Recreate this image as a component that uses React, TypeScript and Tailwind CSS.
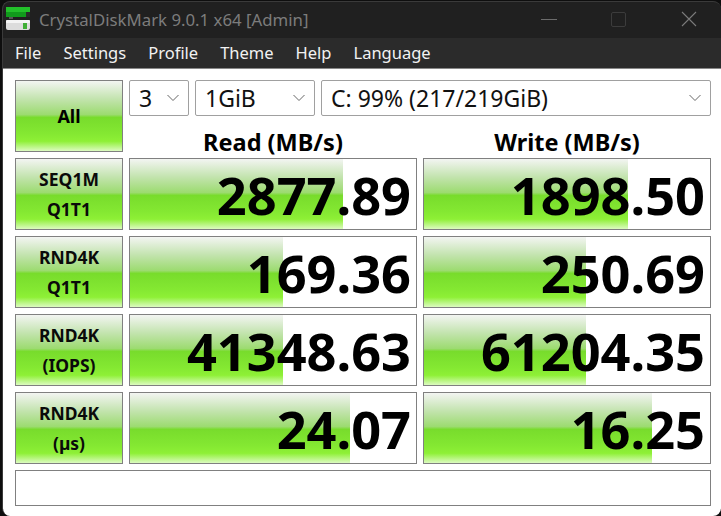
const FONT = "font-['Noto_Sans',sans-serif]"
const GREEN = 'bg-[linear-gradient(180deg,#f3f5f2_0%,#c4e4b0_25%,#9cdb70_48%,#78dc2c_52%,#84e832_75%,#8ef036_86%,#dcfbc0_100%)]'

const rows = [
  { top: 'SEQ1M', bottom: 'Q1T1', read: '2877.89', readBar: 213, write: '1898.50', writeBar: 204 },
  { top: 'RND4K', bottom: 'Q1T1', read: '169.36', readBar: 153, write: '250.69', writeBar: 162 },
  { top: 'RND4K', bottom: '(IOPS)', read: '41348.63', readBar: 153, write: '61204.35', writeBar: 162 },
  { top: 'RND4K', bottom: '(µs)', read: '24.07', readBar: 220, write: '16.25', writeBar: 228 },
]

const Combo = ({ label, className }: { label: string; className: string }) => (
  <div className={`flex h-9 items-center justify-between rounded-[2px] border border-[#a0a0a0] bg-white pl-[9px] pr-[8px] text-[23px] text-[#111] ${className}`}>
    <span className="pt-[1px]">{label}</span>
    <svg width="14" height="8" viewBox="0 0 14 8" fill="none" stroke="#666" strokeWidth="1">
      <path d="M1.5 1 L7 6.5 L12.5 1" />
    </svg>
  </div>
)

const Score = ({ value, bar }: { value: string; bar: number }) => (
  <div
    className={`flex h-[72px] items-center justify-end border border-[#808080] bg-white pt-[3px] pr-[5px] ${GREEN} bg-no-repeat`}
    style={{ backgroundSize: `${bar}px 100%` }}
  >
    <span className="text-[52.3px] leading-none font-bold text-black">{value}</span>
  </div>
)

function DriveIcon() {
  return (
    <svg width="26" height="24" viewBox="0 0 26 24" className="shrink-0">
      <rect x="1" y="0" width="24" height="5" fill="#22c02a" />
      <rect x="1" y="5" width="20" height="5" fill="#119a1c" />
      <rect x="21" y="5" width="4" height="5" fill="#2a2a2a" />
      <rect x="4" y="10" width="4" height="2" fill="#555" />
      <rect x="1" y="13" width="24" height="10" rx="2" fill="#dcdcdc" />
      <rect x="1" y="13" width="24" height="3" rx="1" fill="#f4f4f4" />
      <rect x="18" y="16" width="4" height="6" fill="#3fae35" />
    </svg>
  )
}

export default function App() {
  return (
    <div className={`h-[516px] w-[721px] overflow-hidden bg-[#0e0e0e] pl-[2px] pt-[1px] ${FONT}`}>
      <div className="flex h-[515px] flex-col overflow-hidden rounded-[8px] border-t border-l border-[#3a3a3a] bg-[#202020]">

        {/* Title bar */}
        <div className="flex h-9 shrink-0 items-center pl-[2px] pb-[2px]">
          <DriveIcon />
          <span className="ml-[8px] pt-[1px] text-[16.8px] text-[#7c7c7c]">CrystalDiskMark 9.0.1 x64 [Admin]</span>
          <div className="ml-auto flex items-center pr-[24px]">
            <span className="h-px w-[16px] bg-[#6c6c6c]" />
            <span className="ml-[54px] h-[15px] w-[15px] rounded-[2px] border border-[#3c3c3c]" />
            <svg width="16" height="16" viewBox="0 0 16 16" stroke="#7a7a7a" strokeWidth="1.1" className="ml-[55px]">
              <path d="M1 1 L15 15 M15 1 L1 15" />
            </svg>
          </div>
        </div>

        {/* Menu */}
        <div className="flex h-[30px] shrink-0 items-center gap-[22px] bg-[#2b2b2b] pl-[12px] text-[16.5px] text-[#f2f2f2]">
          <span>File</span>
          <span>Settings</span>
          <span>Profile</span>
          <span>Theme</span>
          <span>Help</span>
          <span>Language</span>
        </div>

        {/* Content */}
        <div className="flex flex-1 flex-col gap-[6px] border-t border-[#888] bg-white pt-[11px] pr-[10px] pl-[12px]">
          <div className="grid grid-cols-[108px_1fr] gap-[6px]">
            <div className={`flex h-[72px] items-center justify-center border border-[#808080] ${GREEN} text-[18px] font-bold text-black`}>All</div>
            <div className="flex flex-col">
              <div className="flex gap-[6px]">
                <Combo label="3" className="w-[60px]" />
                <Combo label="1GiB" className="w-[120px]" />
                <Combo label="C: 99% (217/219GiB)" className="flex-1" />
              </div>
              <div className="grid h-9 grid-cols-2 gap-[6px] text-center text-[23.5px] leading-[52px] font-bold text-black">
                <span>Read (MB/s)</span>
                <span>Write (MB/s)</span>
              </div>
            </div>
          </div>

          {rows.map((row, i) => (
            <div key={i} className="grid grid-cols-[108px_288px_288px] gap-[6px]">
              <div className={`flex h-[72px] flex-col items-center justify-center gap-[6px] border border-[#808080] ${GREEN} text-[17.5px] leading-[24px] font-bold text-[#0a0a0a]`}>
                <span>{row.top}</span>
                <span>{row.bottom}</span>
              </div>
              <Score value={row.read} bar={row.readBar} />
              <Score value={row.write} bar={row.writeBar} />
            </div>
          ))}

          {/* Comment box */}
          <div className="h-9 border border-[#808080] bg-white" />
        </div>
      </div>
    </div>
  )
}
